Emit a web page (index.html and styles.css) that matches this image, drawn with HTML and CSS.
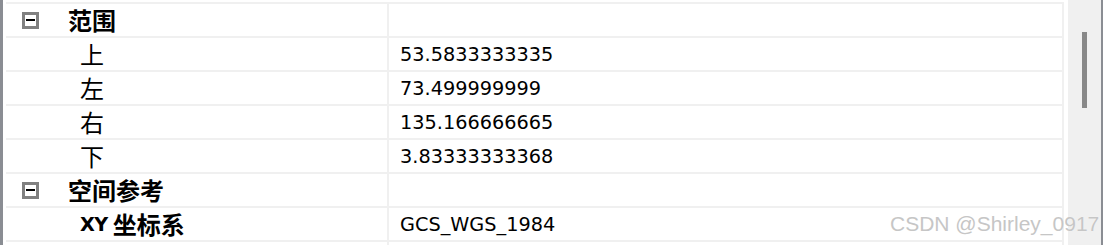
FILE: index.html
```html
<!DOCTYPE html>
<html lang="zh-CN">
<head>
    <meta charset="UTF-8">
    <title>属性</title>
    <link rel="stylesheet" href="styles.css">
</head>
<body>
    <div class="frame">
        <div class="grid">
            <div class="row group">
                <div class="name"><span class="toggle"></span><span class="cjk">范围</span></div>
                <div class="value"></div>
            </div>
            <div class="row">
                <div class="name child"><span class="cjk">上</span></div>
                <div class="value">53.5833333335</div>
            </div>
            <div class="row">
                <div class="name child"><span class="cjk">左</span></div>
                <div class="value">73.499999999</div>
            </div>
            <div class="row">
                <div class="name child"><span class="cjk">右</span></div>
                <div class="value">135.166666665</div>
            </div>
            <div class="row">
                <div class="name child"><span class="cjk">下</span></div>
                <div class="value">3.83333333368</div>
            </div>
            <div class="row group">
                <div class="name"><span class="toggle"></span><span class="cjk">空间参考</span></div>
                <div class="value"></div>
            </div>
            <div class="row bold">
                <div class="name child"><span class="latin">XY</span><span class="cjk">坐标系</span></div>
                <div class="value">GCS_WGS_1984</div>
            </div>
            <div class="row">
                <div class="name child"></div>
                <div class="value"></div>
            </div>
        </div>
        <div class="scrollbar">
            <div class="thumb"></div>
        </div>
    </div>
    <div class="watermark">CSDN @Shirley_0917</div>
</body>
</html>
```

FILE: styles.css
```css
body {
    margin: 0;
    background: white;
    font-family: "DejaVu Sans", sans-serif;
    font-size: 19.3px;
    color: #000;
    overflow: hidden;
}

.frame {
    display: flex;
    height: 245px;
    border-left: 3px solid #8a8d93;
    border-right: 2px solid #8a8d93;
    box-sizing: border-box;
    overflow: hidden;
}

.grid {
    width: 1058px;
    margin-left: 3px;
    padding-top: 2px;
    display: flex;
    flex-direction: column;
    overflow: hidden;
}

.row {
    display: flex;
    flex-shrink: 0;
    height: 32px;
    border-top: 2px solid #f0f0f0;
    border-right: 2px solid #f0f0f0;
}

.name {
    width: 383px;
    border-right: 2px solid #f0f0f0;
    display: flex;
    align-items: center;
    padding-left: 16px;
    box-sizing: border-box;
}

.name.child {
    padding-left: 74px;
}

.value {
    flex: 1;
    display: flex;
    align-items: center;
    padding-left: 11px;
}

.toggle {
    width: 11px;
    height: 11px;
    border: 3px solid #808080;
    margin-right: 29px;
    position: relative;
    flex-shrink: 0;
}

.toggle::after {
    content: "";
    position: absolute;
    left: 1px;
    right: 1px;
    top: 4px;
    height: 2px;
    background: #000;
}

.cjk {
    font-family: "Noto Sans CJK SC", sans-serif;
    font-size: 24px;
    line-height: 1;
}

.group .cjk,
.bold .cjk {
    font-weight: bold;
}

.latin {
    font-weight: bold;
    margin-right: 5px;
    letter-spacing: -0.5px;
}

.scrollbar {
    width: 33px;
    margin-left: 4px;
    background: #f0f0f0;
    position: relative;
}

.thumb {
    position: absolute;
    left: 14px;
    top: 32px;
    width: 5px;
    height: 76px;
    background: #888;
}

.watermark {
    position: absolute;
    left: 890px;
    top: 212px;
    font-family: "Liberation Sans", sans-serif;
    font-size: 21px;
    color: #c6c6c6;
    text-shadow: 0 0 1px rgba(255,255,255,0.8);
}
```
